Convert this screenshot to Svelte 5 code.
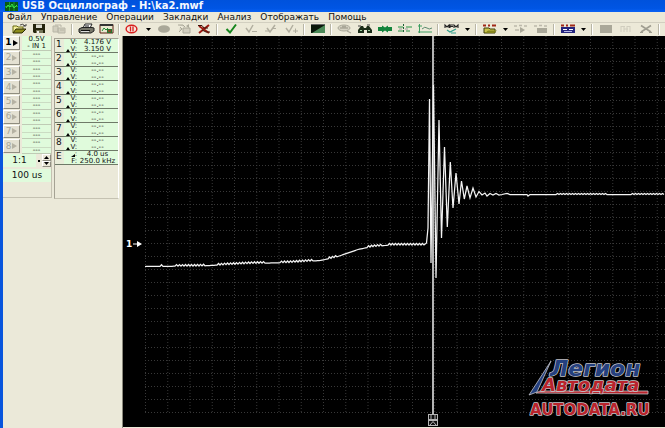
<script>
  const menu = ['Файл', 'Управление', 'Операции', 'Закладки', 'Анализ', 'Отображать', 'Помощь'];

  const tools = [
    'open', 'save', 'copy', '|', 'print', 'image', '|', 'stop', 'v', 'record', 'export', 'delete', '|',
    'check', 'check1', 'check2', 'check3', '|', 'invert', '|', 'cloud', 'find', 'fit', 'levels', 'axes', '|',
    'mem', 'v', '|', 'load', 'v', 'play', 'store', '|', 'script', 'v', '|', 'panel', 'bars', 'cut', '|'
  ];

  const channels = [1, 2, 3, 4, 5, 6, 7, 8];

  const columns = Array.from({ length: 24 }, (_, i) => 145.5 + i * 22.25);
  const rows = Array.from({ length: 29 }, (_, i) => 48.5 + i * 13);

  const base = [
    [145, 266.5], [200, 266], [250, 263.5], [290, 262.5], [320, 260.5], [335, 257.5], [345, 254],
    [358, 249.5], [370, 247], [390, 245], [425, 245]
  ];
  const noisy = [[160, 163], [174, 206], [218, 264], [280, 312], [327, 336], [368, 383], [388, 425]];

  function level(x) {
    const i = Math.max(1, base.findIndex((p) => p[0] >= x));
    const [x0, y0] = base[i - 1];
    const [x1, y1] = base[i];
    return y0 + ((y1 - y0) * (x - x0)) / (x1 - x0);
  }

  const lead = [];
  for (let x = 145; x <= 425; x += 1.5) {
    const n = Math.round((x - 145) / 1.5);
    const noise = noisy.some(([a, b]) => x >= a && x <= b) ? (n % 2 ? -1.6 : 0) : 0;
    lead.push([x, level(x) + noise]);
  }

  const ring = [
    [426.5, 243], [428, 228], [429.5, 99], [431, 263], [433.5, 85], [436, 278], [439, 120], [441.5, 238],
    [444.5, 147], [447.3, 227], [450.3, 162], [453, 208], [456, 173], [459, 204], [461.5, 181], [464.3, 199],
    [467, 186], [470, 198], [473, 188], [476, 197], [479, 191.5], [482, 195], [485, 193], [487, 196],
    [490, 193.5], [493, 195], [496, 193.5], [499, 195], [502, 194.5], [507, 193.5], [510, 194.5],
    [527, 194.5], [528, 196], [530, 194.5]
  ];

  const tail = [];
  for (let x = 532; x <= 665; x += 1.5) {
    const n = Math.round((x - 532) / 1.5);
    const noise = (x > 556 && x < 608) || x > 632 ? (n % 2 ? -1 : 0) : 0;
    tail.push([x, 194.5 + noise]);
  }

  const trace = [...lead, ...ring, ...tail].map((p) => p.join(',')).join(' ');
</script>

<div class="window">
  <header class="title">
    <svg class="logo" viewBox="0 0 13 9" aria-hidden="true">
      <rect width="13" height="9" fill="#0a5a14" />
      <path d="M0 4.5H13M4.5 0V9M9 0V9" stroke="#19a32a" />
      <path d="M1 6L3 3L5 5L7 2L9 6L12 3" fill="none" stroke="#3be04c" />
    </svg>
    <h1>USB Осциллограф - H:\ka2.mwf</h1>
  </header>

  <div class="client">
    <nav class="menu">
      {#each menu as item}<button>{item}</button>{/each}
    </nav>

    <div class="toolbar">
      {#each tools as t}
        {#if t === '|'}
          <span class="sep"></span>
        {:else if t === 'v'}
          <button class="drop" aria-label="more"><svg viewBox="0 0 5 3"><path d="M0 0H5L2.5 3Z" /></svg></button>
        {:else}
          <button class="tool" aria-label={t}>
            <svg viewBox="0 0 20 12">
              {#if t === 'open'}
                <path d="M4 10V3H8L9 4H14V6" fill="#f4f09a" stroke="#6a6a10" />
                <path d="M4 10L7 6H17L13 10Z" fill="#8c8c1c" stroke="#2c2c08" />
                <path d="M11 2Q14 0 16 3M14 3H17V1" fill="none" stroke="#222" stroke-width=".8" />
              {:else if t === 'save'}
                <path d="M4 1H16V10H5L4 9Z" fill="#24240c" />
                <path d="M7 1.5H13V5H7Z" fill="#dcdcd0" />
                <path d="M7 7H14V10H7Z" fill="#77775a" />
                <path d="M8 8H10V10H8Z" fill="#eee" />
              {:else if t === 'copy'}
                <path d="M4 3H9V9H4ZM9 5H16V10H9Z" fill="#d2cfbf" stroke="#b8b5a6" />
                <path d="M6 2H12V4M11 7H15" stroke="#b8b5a6" fill="none" />
              {:else if t === 'print'}
                <path d="M7 5L9 1H16L14 5" fill="#fff" stroke="#222" />
                <path d="M3 6L6 4.5H16L18 5V8L15 10H4L3 9Z" fill="#77776b" stroke="#222" />
                <path d="M5 7.5H14M9 3H13" stroke="#111" />
                <path d="M5 8.5H13" stroke="#ddd" />
              {:else if t === 'image'}
                <path d="M4 1.5H17V10H4Z" fill="#e8e7cf" stroke="#5a1f10" />
                <path d="M4 2H17" stroke="#333" stroke-width="2" />
                <path d="M6 8L8 5L10 7L12 5" fill="none" stroke="#208c38" />
                <path d="M11 6H16V10H11Z" fill="#26722c" />
                <path d="M12 8H15" stroke="#d02020" />
              {:else if t === 'stop'}
                <ellipse cx="8.5" cy="6" rx="5.4" ry="3.8" fill="#f6e6dc" stroke="#d81d1d" stroke-width="1.4" />
                <path d="M7.5 3.5V8.5M10 3.5V8.5" stroke="#d81d1d" stroke-width="1.3" />
              {:else if t === 'record'}
                <ellipse cx="10" cy="6" rx="6" ry="3.8" fill="#aaa899" />
              {:else if t === 'export'}
                <path d="M4 2H9L11 4M5 9L8 6L6 4M9 5H16V10H9Z" fill="#d2cfbf" stroke="#aaa899" />
                <path d="M12 3L15 1V5Z" fill="#aaa899" />
              {:else if t === 'delete'}
                <path d="M5 3L15 10M15 2L5 10" stroke="#9c1a10" stroke-width="2" />
                <path d="M4 2.5H8L10 5H14M8 7L12 9H16" fill="none" stroke="#3c1208" />
              {:else if t === 'check'}
                <path d="M5.5 6L9 9.5L15 1.5" fill="none" stroke="#15851c" stroke-width="2" />
              {:else if t === 'check1'}
                <path d="M5 5L8 9L12 2" fill="none" stroke="#b1ae9f" stroke-width="1.5" />
                <path d="M11 8.5H16" stroke="#b1ae9f" />
              {:else if t === 'check2'}
                <path d="M6 5L9 9L14 2" fill="none" stroke="#b1ae9f" stroke-width="1.5" />
                <path d="M4 8H8M11 5.5H15" stroke="#b1ae9f" />
              {:else if t === 'check3'}
                <path d="M5 5L8 9L12 2" fill="none" stroke="#b1ae9f" stroke-width="1.5" />
                <path d="M12 8H17M14.5 5.5V10" stroke="#b1ae9f" />
              {:else if t === 'invert'}
                <path d="M3 2H17V10H3Z" fill="#0a170b" />
                <path d="M17 2V10H4Z" fill="#4c8a58" />
                <path d="M3 1.5H17" stroke="#666" />
              {:else if t === 'cloud'}
                <ellipse cx="9" cy="5" rx="6" ry="3" fill="#d5d2c3" stroke="#aaa899" />
                <path d="M5 5H13M7 3.5H11M12 8L16 10" stroke="#aaa899" stroke-width="1.3" />
              {:else if t === 'find'}
                <path d="M3 10V7L6 3H8L9 5H11L12 3H14L17 7V10H12V7H9V10Z" fill="#1a2c18" />
                <path d="M3 3H6M12 2H15" stroke="#444" stroke-width="1.2" />
                <path d="M5 7.5H7M13 7.5H15" stroke="#9fcf9f" />
              {:else if t === 'fit'}
                <path d="M3 4H7V2.5L10 4.5L13 2.5V4H17V8H13V9.5L10 7.5L7 9.5V8H3Z" fill="#13843d" />
              {:else if t === 'levels'}
                <path d="M3 4H8M3 8H8M11 4H17M11 8H15" stroke="#2b9447" />
                <path d="M8.5 1V10" stroke="#1b5e35" stroke-dasharray="2 1" />
                <path d="M10 6H13M4 6H7" stroke="#999" />
              {:else if t === 'axes'}
                <path d="M4.5 1V10M3 3H7M3 9H17" stroke="#3f9e62" />
                <path d="M7 6Q10 3 12 5T17 5" fill="none" stroke="#5c8a6e" />
              {:else if t === 'mem'}
                <path d="M3 5V2L5 4L7 2V5M8 5V2H11M8 3.5H11M12 5V2L14 4L16 2V5" fill="none" stroke="#222" stroke-width="1.1" />
                <path d="M5 7L8 9L14 6M9 10H14" fill="none" stroke="#2f9f8c" stroke-width="1.2" />
              {:else if t === 'load'}
                <path d="M3 2.5H6M8 2.5H10M12 2.5H16" stroke="#a02818" stroke-width="2" />
                <path d="M4 10V5H9L10 6H15V10Z" fill="#c9c34a" stroke="#3f3f0b" />
                <path d="M5 10L8 7.5H17L14 10Z" fill="#86861c" />
              {:else if t === 'play'}
                <path d="M3 3H6M8 2.5H11M13 3H16M4 7H8" stroke="#bcb9aa" stroke-width="1.4" />
                <path d="M9 4V10L14 7Z" fill="#aaa899" />
              {:else if t === 'store'}
                <path d="M3 3H6M8 2.5H11M13 3H16" stroke="#bcb9aa" stroke-width="1.4" />
                <path d="M6 5H16V10H6Z" fill="#aaa899" />
              {:else if t === 'script'}
                <path d="M3 2.5H6M8 2.5H10M12 2.5H17" stroke="#a02818" stroke-width="2" />
                <path d="M3 4H17V10H3Z" fill="#25257e" />
                <path d="M5 6.5H9M11 6.5H15" stroke="#fff" />
                <path d="M6 8.5H14" stroke="#b7b7e8" />
              {:else if t === 'panel'}
                <path d="M4 2H16V10H4Z" fill="#aaa899" />
              {:else if t === 'bars'}
                <path d="M5 3V9M8 3V9M11 3V9M14 3V9M5 3.5H9M11 3.5H14M8 6H12" stroke="#d0cdbe" />
              {:else if t === 'cut'}
                <path d="M5 2.5L15 9M15 2.5L5 9" stroke="#9f9d90" stroke-width="1.6" />
                <path d="M4 9.5H7M13 9.5H16" stroke="#9f9d90" />
              {/if}
            </svg>
          </button>
        {/if}
      {/each}
    </div>

    <main>
      <aside>
        <section class="inputs">
          <div class="list">
            {#each channels as n}
              <div class="channel">
                <button class:on={n === 1}>{n}<svg viewBox="0 0 5 6"><path d="M0 0L5 3L0 6Z" /></svg></button>
                <div class="range">
                  <span>{n === 1 ? '0.5V' : '---'}</span>
                  <span>{n === 1 ? '- IN 1' : '---'}</span>
                </div>
              </div>
            {/each}
          </div>
          <div class="ratio">
            <output>1:1</output>
            <button class="dot" aria-label="ratio"><svg viewBox="0 0 4 4"><rect x="1" y="1" width="2" height="2" /></svg></button>
            <div class="spin">
              <button aria-label="up"><svg viewBox="0 0 5 3"><path d="M0 3H5L2.5 0Z" /></svg></button>
              <button aria-label="down"><svg viewBox="0 0 5 3"><path d="M0 0H5L2.5 3Z" /></svg></button>
            </div>
          </div>
          <output class="time">100 us</output>
        </section>

        <section class="measures">
          {#each channels as n}
            <div class="measure">
              <b>{n}</b>
              <div class="keys">
                <span>V:</span>
                <span><svg viewBox="0 0 4 3"><path d="M0 3H4L2 0Z" /></svg>V:</span>
              </div>
              <div class="vals">
                <span>{n === 1 ? '4.176 V' : '--.--'}</span>
                <span>{n === 1 ? '3.150 V' : '--.--'}</span>
              </div>
            </div>
          {/each}
          <div class="measure">
            <b>E</b>
            <div class="keys">
              <span><svg viewBox="0 0 4 3"><path d="M0 3H4V0Z" /></svg>:</span>
              <span>F:</span>
            </div>
            <div class="vals">
              <span>4.0 us</span>
              <span>250.0 kHz</span>
            </div>
          </div>
        </section>
      </aside>

      <div class="scope">
        <svg viewBox="123 36 542 391" preserveAspectRatio="xMinYMin meet">
          <g class="grid">
            {#each columns as x}<line x1={x} x2={x} y1="36" y2="413" />{/each}
            {#each rows as y}<line x1="145" x2="665" y1={y} y2={y} />{/each}
          </g>
          <line class="cursor" x1="433" x2="433" y1="36" y2="414" />
          <polyline class="trace" points={trace} />
          <g class="marker">
            <text x="126" y="247">1</text>
            <path d="M133 243.5H137V241L142 244L137 247V244.5H133Z" />
          </g>
          <g class="handle">
            <rect x="428.5" y="414.5" width="9" height="5" />
            <path d="M431 415V419M435 415V419" />
            <rect x="428.5" y="420.5" width="9" height="5" />
            <path d="M430 425L433 421.5L436 425" />
          </g>
          <g class="brand">
            <path d="M536 393L540 391H648V394Z" fill="#b9232b" stroke="#c4c4ca" stroke-width=".8" />
            <path d="M551 361L529 395L537 392Z" fill="#24407f" stroke="#c4c4ca" stroke-width=".8" />
            <text class="blue" x="550" y="376">Легион</text>
            <text class="red" x="542" y="391">Автодата</text>
            <text class="site" x="530" y="415">AUTODATA.RU</text>
          </g>
        </svg>
      </div>
    </main>
  </div>
</div>

<style>
  :global(body) {
    margin: 0;
  }
  .window {
    box-sizing: border-box;
    min-height: 100vh;
    display: flex;
    flex-direction: column;
    background: #0855dd;
    font: 9px/11px 'DejaVu Sans', Verdana, sans-serif;
    color: #111;
  }
  button {
    font: inherit;
    color: inherit;
    padding: 0;
    margin: 0;
    border: 0;
    background: none;
  }
  .title {
    height: 12px;
    display: flex;
    align-items: center;
    gap: 4px;
    padding: 0 5px;
    background: linear-gradient(#0052dc, #0055e4 70%, #0a62f4);
  }
  .logo {
    width: 13px;
    height: 9px;
  }
  h1 {
    margin: 0;
    font-size: 10px;
    line-height: 12px;
    color: #f4f8ff;
    white-space: nowrap;
  }
  .client {
    flex: 1;
    display: flex;
    flex-direction: column;
    margin-left: 3px;
    background: #ece9d8;
  }
  .menu {
    height: 10px;
    display: flex;
    align-items: center;
    gap: 9px;
    padding: 0 4px;
    border-bottom: 1px solid #d2cfc0;
    line-height: 10px;
  }
  .toolbar {
    height: 12px;
    display: flex;
    align-items: center;
    padding: 0 0 1px 6px;
    overflow: hidden;
  }
  .tool {
    flex: none;
    width: 20px;
    height: 12px;
  }
  .tool svg {
    display: block;
    width: 20px;
    height: 12px;
  }
  .drop {
    flex: none;
    width: 11px;
    height: 12px;
    display: grid;
    place-items: center;
  }
  .drop svg {
    width: 5px;
    height: 3px;
  }
  .sep {
    flex: none;
    width: 1px;
    height: 11px;
    margin: 0 3px 0 2px;
    background: #b9b6a6;
    border-right: 1px solid #fff;
  }
  main {
    flex: 1;
    display: flex;
  }
  aside {
    flex: none;
    width: 119px;
    display: flex;
    align-items: flex-start;
    gap: 2px;
    border-right: 1px solid #8b897c;
    background: #ebe9d9;
  }
  .inputs {
    box-sizing: border-box;
    width: 49px;
    height: 162px;
    display: flex;
    flex-direction: column;
    border-right: 1px solid #c5c2b2;
    border-bottom: 1px solid #c5c2b2;
  }
  .list {
    flex: none;
    height: 118px;
    display: flex;
    flex-direction: column;
  }
  .channel {
    flex: 1 1 0;
    min-height: 0;
    display: flex;
    gap: 2px;
  }
  .channel button {
    box-sizing: border-box;
    width: 17px;
    margin-bottom: 1px;
    display: flex;
    align-items: center;
    justify-content: center;
    gap: 1px;
    border: 1px solid;
    border-color: #fff #8f8d80 #8f8d80 #fff;
    background: #e4e1d2;
    color: #aaa798;
    fill: #b5b2a3;
  }
  .channel button.on {
    color: #000;
    fill: #000;
    font-weight: bold;
    background: #f1efe4;
  }
  .channel svg {
    width: 5px;
    height: 6px;
  }
  .range {
    flex: 1;
    display: flex;
    flex-direction: column;
    text-align: center;
    font-size: 7px;
    line-height: 7px;
    background: #e0fbdc;
    box-shadow: inset 0 -1px #bfcbb5;
  }
  .range span {
    flex: 1 1 0;
  }
  .channel:not(:first-child) .range span + span {
    box-shadow: inset 0 1px #cbdcc3;
  }
  .ratio {
    flex: none;
    height: 13px;
    display: flex;
    align-items: stretch;
  }
  output {
    flex: 1;
    background: #e0fbdc;
    text-align: center;
    line-height: 13px;
  }
  .dot {
    width: 6px;
    display: grid;
    place-items: center;
  }
  .dot svg {
    width: 4px;
    height: 4px;
  }
  .spin {
    width: 9px;
    display: flex;
    flex-direction: column;
  }
  .spin button {
    flex: 1;
    display: grid;
    place-items: center;
    border: 1px solid;
    border-color: #fff #8f8d80 #8f8d80 #fff;
  }
  .spin svg {
    width: 5px;
    height: 3px;
  }
  .time {
    flex: none;
    height: 13px;
    margin-top: 2px;
  }
  .measures {
    box-sizing: border-box;
    flex: 1;
    height: 161px;
    margin: 2px 3px 0 0;
    border: 1px solid #a5a294;
    border-color: #a5a294 #fff #c5c2b2 #a5a294;
    font-size: 7px;
    line-height: 7px;
  }
  .measure {
    box-sizing: border-box;
    height: 14px;
    display: flex;
    background: #e0fbdc;
    box-shadow: inset 0 -1px #6f7a68;
    white-space: nowrap;
  }
  .measure b {
    width: 8px;
    padding-left: 1px;
    font-size: 9px;
    line-height: 11px;
    font-weight: normal;
    background: #e9ecd9;
    box-shadow: inset 0 -1px #6f7a68;
  }
  .keys,
  .vals {
    display: flex;
    flex-direction: column;
  }
  .keys {
    width: 13px;
  }
  .keys span {
    display: flex;
    justify-content: flex-end;
    align-items: flex-end;
  }
  .keys svg {
    width: 4px;
    height: 3px;
    margin-bottom: 1px;
  }
  .vals {
    flex: 1;
    text-align: center;
  }
  .scope {
    flex: 1;
    min-width: 0;
    background: #000;
    margin-bottom: 1px;
  }
  .scope svg {
    display: block;
    width: 100%;
  }
  .grid line {
    stroke: #383838;
    stroke-dasharray: 1 2;
  }
  .cursor {
    stroke: #b4b4b4;
    stroke-width: 2;
  }
  .trace {
    fill: none;
    stroke: #f4f4f4;
    stroke-width: 1.25;
  }
  .marker {
    fill: #fff;
    font-size: 9px;
    font-weight: bold;
  }
  .handle {
    fill: #111;
    stroke: #b5b5b5;
  }
  .brand text {
    paint-order: stroke;
    stroke: #c4c4ca;
    stroke-width: 1.5px;
    stroke-linejoin: round;
    font-weight: bold;
  }
  .brand .blue,
  .brand .red {
    font-style: italic;
  }
  .brand .blue {
    font-size: 22px;
    fill: #24407f;
  }
  .brand .red {
    font-size: 18px;
    fill: #b9232b;
  }
  .brand .site {
    font-size: 15px;
    fill: #b9232b;
  }
</style>
